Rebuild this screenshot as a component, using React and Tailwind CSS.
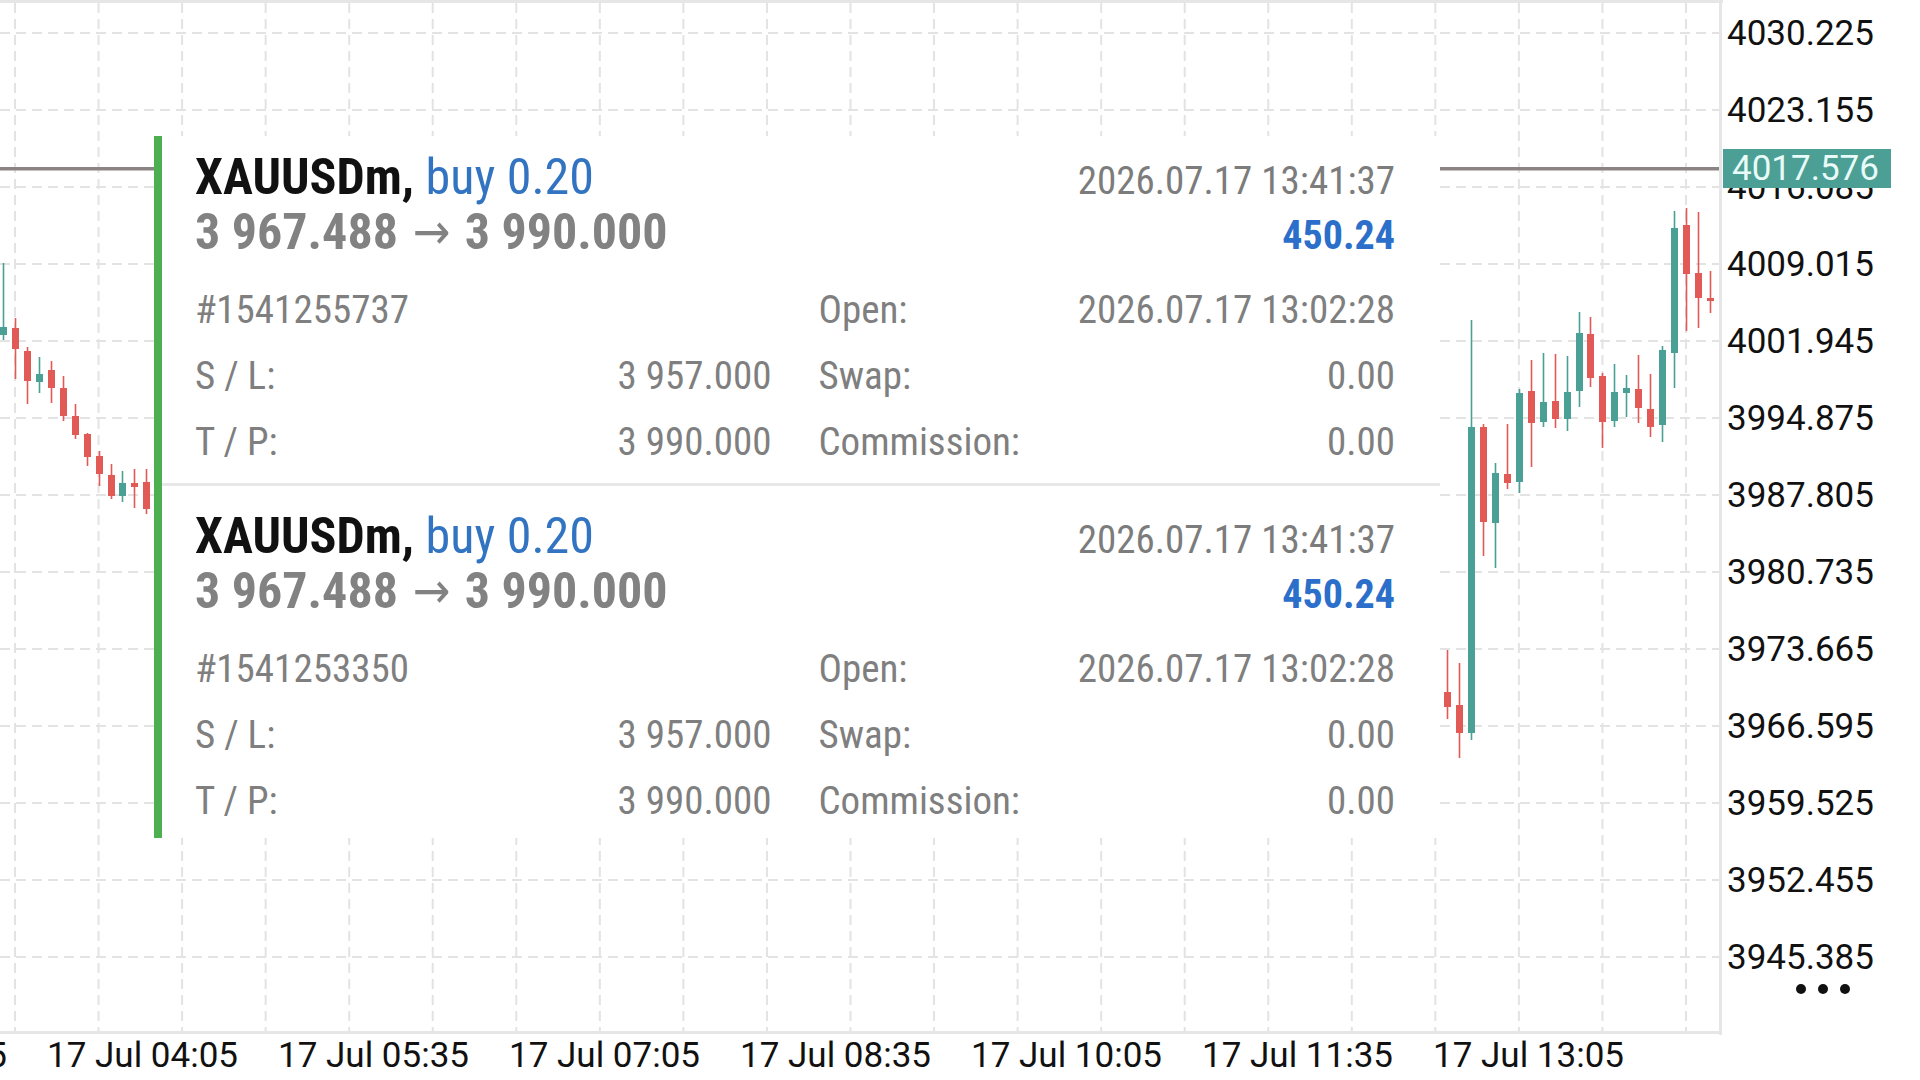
import React from 'react';

const TEAL = '#4aa095';
const RED = '#e15a55';

// [cx, wickTop, wickBottom, bodyTop, bodyBottom, up]
const candles = [
  [3.5, 263, 340, 327, 335, true],
  [15.5, 318, 379, 328, 349, false],
  [27.5, 347, 404, 351, 381, false],
  [39.5, 357, 393, 374, 382, true],
  [51.5, 361, 403, 370, 388, false],
  [63.5, 376, 421, 388, 416, false],
  [75.5, 404, 439, 416, 435, false],
  [87.5, 433, 466, 434, 457, false],
  [99.5, 451, 486, 456, 474, false],
  [111.5, 464, 499, 475, 496, false],
  [122.5, 471, 502, 483, 496, true],
  [134.5, 469, 508, 483, 487, false],
  [146.5, 469, 514, 482, 509, false],
  [1447.5, 650, 719, 692, 707, false],
  [1459.5, 663, 758, 705, 733, false],
  [1471.5, 320, 740, 427, 733, true],
  [1483.5, 424, 556, 427, 522, false],
  [1495.5, 463, 568, 473, 523, true],
  [1507.5, 424, 489, 474, 483, false],
  [1519.5, 389, 493, 393, 482, true],
  [1531.5, 360, 467, 391, 423, false],
  [1543.5, 353, 427, 402, 422, true],
  [1555.5, 354, 428, 401, 419, false],
  [1567.5, 356, 431, 392, 419, true],
  [1579.5, 312, 407, 333, 391, true],
  [1590.5, 317, 387, 334, 378, false],
  [1602.5, 373, 448, 376, 422, false],
  [1614.5, 364, 427, 392, 421, true],
  [1626.5, 375, 417, 388, 393, true],
  [1638.5, 355, 423, 389, 408, false],
  [1650.5, 374, 437, 409, 427, false],
  [1662.5, 346, 442, 350, 425, true],
  [1674.5, 211, 388, 228, 353, true],
  [1686.5, 208, 331, 225, 274, false],
  [1698.5, 212, 328, 273, 298, false],
  [1710.5, 271, 313, 298, 301, false],
];

const prices = [
  '4030.225', '4023.155', '4016.085', '4009.015', '4001.945', '3994.875', '3987.805',
  '3980.735', '3973.665', '3966.595', '3959.525', '3952.455', '3945.385',
];

const times = [
  '17 Jul 02:35', '17 Jul 04:05', '17 Jul 05:35', '17 Jul 07:05', '17 Jul 08:35',
  '17 Jul 10:05', '17 Jul 11:35', '17 Jul 13:05',
];

const positions = [
  { ticket: '#1541255737', first: true },
  { ticket: '#1541253350', first: false },
];

const ChartGrid = () => {
  const vx = Array.from({ length: 21 }, (_, i) => 15 + i * 83.55);
  const hy = Array.from({ length: 13 }, (_, i) => 33 + i * 77);
  return (
    <svg width="1723" height="1035" className="block">
      {vx.map((x) => (
        <line key={'v' + x} x1={x} y1="3" x2={x} y2="1031" stroke="#e3e3e3" strokeWidth="2" strokeDasharray="10 6" />
      ))}
      {hy.map((y) => (
        <line key={'h' + y} x1="0" y1={y} x2="1719" y2={y} stroke="#e3e3e3" strokeWidth="2" strokeDasharray="10 6" />
      ))}
      <rect x="0" y="0" width="1723" height="3" fill="#e6e6e6" />
      <rect x="1719" y="0" width="3" height="1035" fill="#e6e6e6" />
      <rect x="0" y="1031" width="1722" height="3" fill="#e6e6e6" />
      <rect x="0" y="167" width="1719" height="3.5" fill="#8a8482" />
      {candles.map(([cx, wt, wb, bt, bb, up]) => {
        const c = up ? TEAL : RED;
        return (
          <g key={cx}>
            <rect x={cx - 0.8} y={wt} width="1.6" height={wb - wt} fill={c} />
            <rect x={cx - 3.5} y={bt} width="7" height={Math.max(bb - bt, 2)} fill={c} />
          </g>
        );
      })}
    </svg>
  );
};

const Position = ({ ticket, first }) => (
  <div className={first ? 'pt-[14px] pb-[8px]' : 'pt-[23px] pb-[4px]'}>
    <div className="flex items-baseline justify-between h-[55px] leading-[55px]">
      <div className="text-[50px] font-bold text-[#111]">
        XAUUSDm, <span className="font-normal text-[#3274c2]">buy 0.20</span>
      </div>
      <div className="text-[39px] text-[#7c7c7c]">2026.07.17 13:41:37</div>
    </div>
    <div className="flex items-baseline justify-between h-[55px] leading-[55px]">
      <div className="text-[50px] font-bold text-[#828282]">
        3 967.488 <span className="font-normal mx-[3px]">→</span> 3 990.000
      </div>
      <div className="text-[40px] font-bold text-[#2b6fca]">450.24</div>
    </div>
    <div className="mt-[17px] grid grid-cols-2 gap-x-[47px] text-[39px] leading-[66px] text-[#7f7f7f]">
      <div className="flex justify-between h-[66px]">
        <span>{ticket}</span>
      </div>
      <div className="flex justify-between h-[66px]">
        <span>Open:</span>
        <span>2026.07.17 13:02:28</span>
      </div>
      <div className="flex justify-between h-[66px]">
        <span>S / L:</span>
        <span>3 957.000</span>
      </div>
      <div className="flex justify-between h-[66px]">
        <span>Swap:</span>
        <span>0.00</span>
      </div>
      <div className="flex justify-between h-[66px]">
        <span>T / P:</span>
        <span>3 990.000</span>
      </div>
      <div className="flex justify-between h-[66px]">
        <span>Commission:</span>
        <span>0.00</span>
      </div>
    </div>
  </div>
);

export default function App() {
  return (
    <div className="w-[1920px] h-[1080px] bg-white overflow-hidden font-['Roboto',sans-serif]">
      <div className="flex h-[1035px]">
        <div className="relative w-[1723px] h-full">
          <ChartGrid />
          <div className="absolute left-[154px] top-[136px] w-[1286px] h-[702px] bg-white border-l-[8px] border-[#4caf50] pl-[33px] pr-[45px] font-['Roboto_Condensed','Liberation_Sans_Narrow','DejaVu_Sans_Condensed',Roboto,sans-serif]">
            <Position {...positions[0]} />
            <div className="h-[3px] bg-[#e8e8e8] -ml-[33px] -mr-[45px]" />
            <Position {...positions[1]} />
          </div>
        </div>
        <div className="relative flex-1">
          <div className="flex flex-col -mt-[5px] pl-[4px]">
            {prices.map((p) => (
              <div key={p} className="h-[77px] leading-[77px] text-[35px] text-[#111]">{p}</div>
            ))}
          </div>
          <div className="absolute left-0 top-[149px] w-[168px] h-[39px] bg-[#4c9f95] text-[#e8fbf8] text-[35px] leading-[39px] pl-[9px]">
            4017.576
          </div>
          <div className="absolute left-[73px] top-[984px] flex gap-[12px]">
            <span className="w-[10px] h-[10px] rounded-full bg-[#111]" />
            <span className="w-[10px] h-[10px] rounded-full bg-[#111]" />
            <span className="w-[10px] h-[10px] rounded-full bg-[#111]" />
          </div>
        </div>
      </div>
      <div className="flex -ml-[204px] h-[45px]">
        {times.map((t) => (
          <div key={t} className="w-[231px] shrink-0 text-center text-[35px] leading-[42px] text-[#111]">{t}</div>
        ))}
      </div>
    </div>
  );
}
